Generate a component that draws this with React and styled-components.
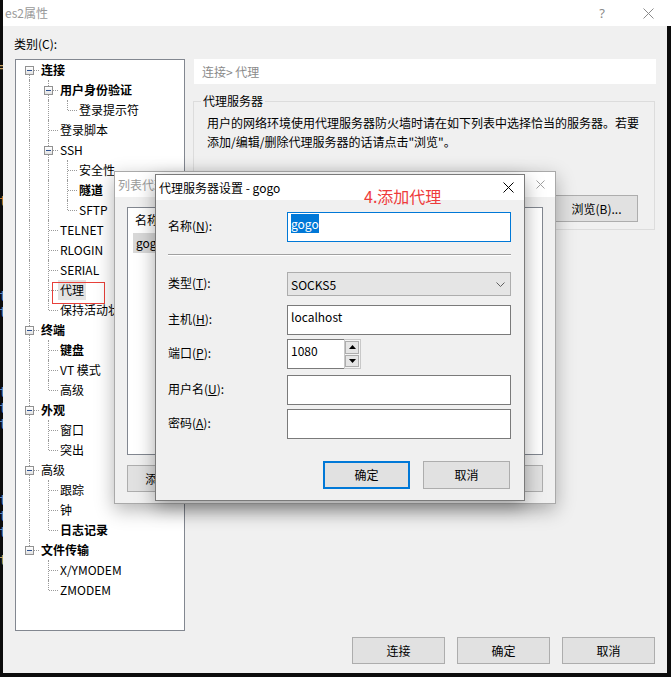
import React from "react";
import styled, { createGlobalStyle, css } from "styled-components";

const GlobalStyle = createGlobalStyle`
  html, body {
    margin: 0;
    padding: 0;
    background: #0c0c0c;
  }
  body {
    font-family: "Noto Sans CJK SC", "Noto Sans", sans-serif;
    font-size: 12px;
    color: #000;
  }
  * {
    box-sizing: border-box;
  }
`;

// Desktop / background
const Screen = styled.div`
  position: relative;
  width: 671px;
  height: 677px;
  overflow: hidden;
  background: #0c0c0c;
  display: flex;
  align-items: flex-start;
`;

const EdgeStrip = styled.div`
  position: relative;
  flex: 0 0 3px;
  height: 100%;
  overflow: hidden;
`;

const EdgeGlyph = styled.span`
  position: absolute;
  left: -1px;
  top: ${(p) => p.$y}px;
  font: 14px/14px "DejaVu Sans Mono", monospace;
  color: ${(p) => p.$c || "#5b86c4"};
`;

// Main properties window
const Window = styled.div`
  width: 664px;
  height: 673px;
  background: #f0f0f0;
  display: flex;
  flex-direction: column;
`;

const TitleBar = styled.div`
  height: 26px;
  margin-right: -4px;
  background: #fff;
  display: flex;
  align-items: center;
  padding-left: 2px;
  color: #999;
`;

const TitleText = styled.span`
  flex: 1;
  line-height: 16px;
`;

const CaptionButton = styled.span`
  width: 46px;
  height: 26px;
  display: flex;
  align-items: center;
  justify-content: center;
  color: #8a8a8a;
  font: 13px "Noto Sans", sans-serif;
`;

const Body = styled.div`
  flex: 1;
  min-height: 0;
  display: flex;
  flex-direction: column;
  padding: 10px 11px 9px 12px;
`;

const CategoryLabel = styled.div`
  height: 16px;
  line-height: 16px;
  margin: 0 0 7px -1px;
`;

const Columns = styled.div`
  flex: 1;
  min-height: 0;
  display: flex;
  gap: 8px;
`;

const Tree = styled.div`
  flex: 0 0 170px;
  border: 1px solid #828790;
  background: #fff;
  padding-left: 4px;
  overflow: hidden;
`;

const TreeRow = styled.div`
  display: flex;
  align-items: center;
  height: 20px;
`;

const Cell = styled.span`
  position: relative;
  flex: 0 0 19px;
  height: 20px;

  &::before {
    content: "";
    display: ${(p) => (p.$up || p.$down ? "block" : "none")};
    position: absolute;
    left: 9px;
    top: ${(p) => (p.$up ? 0 : 10)}px;
    bottom: ${(p) => (p.$down ? 0 : 10)}px;
    border-left: 1px dotted #9a9a9a;
  }

  &::after {
    content: "";
    display: ${(p) => (p.$branch ? "block" : "none")};
    position: absolute;
    left: 10px;
    right: 0;
    top: 10px;
    border-top: 1px dotted #9a9a9a;
  }
`;

const Expander = styled.span`
  position: absolute;
  z-index: 1;
  left: 5px;
  top: 6px;
  width: 9px;
  height: 9px;
  border: 1px solid #919191;
  background: linear-gradient(#ffffff, #e2e2e2);

  &::after {
    content: "";
    position: absolute;
    left: 1px;
    top: 3px;
    width: 5px;
    height: 1px;
    background: #2b4f8f;
  }
`;

const NodeLabel = styled.span`
  position: relative;
  height: 20px;
  line-height: 20px;
  padding: 0 2px;
  white-space: nowrap;
  font-weight: ${(p) => (p.$bold ? 700 : 400)};
  background: ${(p) => (p.$selected ? "#e3e3e3" : "transparent")};

  ${(p) =>
    p.$marked &&
    css`
      &::after {
        content: "";
        position: absolute;
        left: -6px;
        top: 2px;
        width: 51px;
        height: 20px;
        border: 1px solid #e8403a;
      }
    `}
`;

const RightPane = styled.div`
  flex: 1;
  display: flex;
  flex-direction: column;
  min-width: 0;
`;

const Breadcrumb = styled.div`
  height: 25px;
  line-height: 25px;
  margin-left: 1px;
  padding-left: 8px;
  background: #fff;
  color: #8a8a8a;
`;

const GroupBox = styled.fieldset`
  margin: 9px 1px 0 0;
  padding: 0 16px 7px 13px;
  border: 1px solid #dcdcdc;
  min-width: 0;
`;

const Legend = styled.legend`
  margin-left: -6px;
  padding: 0 2px;
  line-height: 16px;
`;

const Description = styled.p`
  margin: 4px 0 0;
  line-height: 19px;
  white-space: nowrap;
`;

const BrowseRow = styled.div`
  display: flex;
  justify-content: flex-end;
  margin-top: 44px;
`;

const Button = styled.button`
  width: ${(p) => p.$w || 93}px;
  height: ${(p) => p.$h || 27}px;
  padding: 0;
  flex-shrink: 0;
  background: #e1e1e1;
  border: ${(p) => (p.$default ? "2px solid #0078d7" : "1px solid #adadad")};
  font-family: inherit;
  font-size: 12px;
  color: #000;
  line-height: 16px;
`;

const Footer = styled.div`
  display: flex;
  justify-content: flex-end;
  gap: 12px;
  margin: 6px 1px 0 0;
`;

// Shared dialog window parts
const DialogTitle = styled.div`
  height: 25px;
  flex-shrink: 0;
  display: flex;
  align-items: center;
  padding: 0 10px 0 3px;
  background: #fff;
  color: ${(p) => (p.$active ? "#000" : "#9a9a9a")};
  line-height: 16px;
`;

const DialogTitleText = styled.span`
  flex: 1;
  white-space: nowrap;
`;

// Background "list proxies" window
const ListWindow = styled.div`
  position: absolute;
  left: 114px;
  top: 171px;
  width: 442px;
  height: 333px;
  display: flex;
  flex-direction: column;
  background: #f0f0f0;
  border: 1px solid #a9a9a9;
  box-shadow: 0 6px 18px rgba(0, 0, 0, 0.3);
`;

const ListBody = styled.div`
  flex: 1;
  display: flex;
  flex-direction: column;
  padding: 10px 12px 0;
`;

const ListBox = styled.div`
  height: 248px;
  background: #fff;
  border: 1px solid #828790;
  padding-top: 3px;
`;

const ListHeader = styled.div`
  height: 18px;
  line-height: 18px;
  padding-left: 7px;
`;

const ListItem = styled.div`
  width: 130px;
  height: 20px;
  line-height: 20px;
  margin: 4px 0 0 5px;
  padding-left: 3px;
  background: #d9d9d9;
`;

const ListButtons = styled.div`
  display: flex;
  justify-content: space-between;
  margin-top: 10px;
`;

// Front "proxy settings" dialog
const ProxyDialog = styled.div`
  position: absolute;
  left: 155px;
  top: 174px;
  width: 370px;
  height: 327px;
  display: flex;
  flex-direction: column;
  background: #f0f0f0;
  border: 1px solid #7a7a7a;
  box-shadow: 0 6px 18px rgba(0, 0, 0, 0.35);
`;

const Annotation = styled.span`
  position: absolute;
  z-index: 2;
  left: 208px;
  top: 11px;
  font-size: 16px;
  line-height: 20px;
  color: #ee3b3b;
  white-space: nowrap;
`;

const Form = styled.div`
  display: flex;
  flex-direction: column;
  padding: 0 13px 0 12px;
`;

const FieldRow = styled.div`
  display: grid;
  grid-template-columns: 119px 1fr;
  align-items: center;
  margin-top: ${(p) => p.$mt}px;
`;

const FieldLabel = styled.label`
  line-height: 16px;
  margin-top: -3px;
  white-space: nowrap;
`;

const TextBox = styled.div`
  height: 30px;
  padding: 1px 3px;
  line-height: 19px;
  background: #fff;
  border: 1px solid ${(p) => (p.$focus ? "#0078d7" : "#7a7a7a")};
  white-space: nowrap;
`;

const Selection = styled.span`
  display: inline-block;
  background: #0078d7;
  color: #fff;
`;

const Separator = styled.div`
  margin-top: 12px;
  border-top: 1px solid #a0a0a0;
  border-bottom: 1px solid #fff;
`;

const Combo = styled.div`
  height: 24px;
  display: flex;
  align-items: center;
  justify-content: space-between;
  padding: 0 5px 0 3px;
  background: #e5e5e5;
  border: 1px solid #adadad;
`;

const SpinBox = styled.div`
  display: flex;
  width: 74px;
  height: 30px;
`;

const SpinInput = styled(TextBox)`
  flex: 1;
  border-right: none;
`;

const SpinButtons = styled.div`
  flex: 0 0 17px;
  display: flex;
  flex-direction: column;
  gap: 1px;
  padding: 1px 1px 1px 0;
  border: 1px solid #c8c8c8;
  background: #f4f4f4;
`;

const SpinButton = styled.span`
  flex: 1;
  display: flex;
  align-items: center;
  justify-content: center;
  background: #e5e5e5;
  border: 1px solid #adadad;
`;

const DialogButtons = styled.div`
  display: flex;
  justify-content: flex-end;
  gap: 13px;
  margin: 22px 1px 0 0;
`;

const CloseIcon = ({ color = "#000", size = 10 }) => (
  <svg width={size} height={size} viewBox={`0 0 ${size} ${size}`}>
    <path
      d={`M0.5 0.5 L${size - 0.5} ${size - 0.5} M${size - 0.5} 0.5 L0.5 ${size - 0.5}`}
      stroke={color}
      strokeWidth="1"
      fill="none"
    />
  </svg>
);

const Chevron = () => (
  <svg width="9" height="5" viewBox="0 0 9 5">
    <path d="M0.5 0.5 L4.5 4.5 L8.5 0.5" stroke="#606060" fill="none" />
  </svg>
);

const Triangle = ({ down }) => (
  <svg width="7" height="4" viewBox="0 0 7 4">
    <path d={down ? "M0 0 L7 0 L3.5 4 Z" : "M3.5 0 L7 4 L0 4 Z"} fill="#000" />
  </svg>
);

const tree = [
  {
    t: "连接",
    b: 1,
    kids: [
      { t: "用户身份验证", b: 1, kids: [{ t: "登录提示符" }] },
      { t: "登录脚本" },
      { t: "SSH", kids: [{ t: "安全性" }, { t: "隧道", b: 1 }, { t: "SFTP" }] },
      { t: "TELNET" },
      { t: "RLOGIN" },
      { t: "SERIAL" },
      { t: "代理", sel: 1 },
      { t: "保持活动状态" },
    ],
  },
  { t: "终端", b: 1, kids: [{ t: "键盘", b: 1 }, { t: "VT 模式" }, { t: "高级" }] },
  { t: "外观", b: 1, kids: [{ t: "窗口" }, { t: "突出" }] },
  { t: "高级", kids: [{ t: "跟踪" }, { t: "钟" }, { t: "日志记录", b: 1 }] },
  { t: "文件传输", b: 1, kids: [{ t: "X/YMODEM" }, { t: "ZMODEM" }] },
];

const flatten = (nodes, guides = [], out = []) => {
  nodes.forEach((n, i) => {
    const last = i === nodes.length - 1;
    out.push({ ...n, guides, last, first: guides.length === 0 && i === 0 });
    if (n.kids) flatten(n.kids, [...guides, !last], out);
  });
  return out;
};

const rows = flatten(tree);

const edgeGlyphs = [
  { y: 60, ch: "=", c: "#c8a060" },
  { y: 194, ch: "t", c: "#d07a30" },
  { y: 289, ch: "t" },
  { y: 305, ch: "t" },
  { y: 385, ch: "t" },
  { y: 401, ch: "t" },
  { y: 417, ch: "t" },
  { y: 493, ch: "t" },
  { y: 509, ch: "t" },
  { y: 525, ch: "t" },
  { y: 553, ch: "t", c: "#c8a060" },
];

const App = () => {
  return (
    <Screen>
      <GlobalStyle />
      <EdgeStrip>
        {edgeGlyphs.map((g, i) => (
          <EdgeGlyph key={i} $y={g.y} $c={g.c}>
            {g.ch}
          </EdgeGlyph>
        ))}
      </EdgeStrip>

      <Window>
        <TitleBar>
          <TitleText>es2属性</TitleText>
          <CaptionButton>?</CaptionButton>
          <CaptionButton>
            <CloseIcon color="#8a8a8a" size={11} />
          </CaptionButton>
        </TitleBar>

        <Body>
          <CategoryLabel>类别(C):</CategoryLabel>
          <Columns>
            <Tree>
              {rows.map((r, i) => (
                <TreeRow key={i}>
                  {r.guides.map((g, j) => (
                    <Cell key={j} $up={g} $down={g} />
                  ))}
                  <Cell $up={!r.first} $down={!r.last} $branch>
                    {r.kids && <Expander />}
                  </Cell>
                  <NodeLabel $bold={r.b} $selected={r.sel} $marked={r.sel}>
                    {r.t}
                  </NodeLabel>
                </TreeRow>
              ))}
            </Tree>

            <RightPane>
              <Breadcrumb>连接&gt; 代理</Breadcrumb>
              <GroupBox>
                <Legend>代理服务器</Legend>
                <Description>
                  用户的网络环境使用代理服务器防火墙时请在如下列表中选择恰当的服务器。若要
                  <br />
                  添加/编辑/删除代理服务器的话请点击"浏览"。
                </Description>
                <BrowseRow>
                  <Button $w={83}>浏览(B)...</Button>
                </BrowseRow>
              </GroupBox>
            </RightPane>
          </Columns>

          <Footer>
            <Button>连接</Button>
            <Button>确定</Button>
            <Button>取消</Button>
          </Footer>
        </Body>
      </Window>

      <ListWindow>
        <DialogTitle>
          <DialogTitleText>列表代理服务器</DialogTitleText>
          <CloseIcon color="#a0a0a0" size={9} />
        </DialogTitle>
        <ListBody>
          <ListBox>
            <ListHeader>名称</ListHeader>
            <ListItem>gogo</ListItem>
          </ListBox>
          <ListButtons>
            <Button $w={86}>添加(A)...</Button>
            <Button $w={86}>编辑(E)...</Button>
            <Button $w={86}>删除(D)</Button>
            <Button $w={86}>关闭</Button>
          </ListButtons>
        </ListBody>
      </ListWindow>

      <ProxyDialog>
        <Annotation>4.添加代理</Annotation>
        <DialogTitle $active>
          <DialogTitleText>代理服务器设置 - gogo</DialogTitleText>
          <CloseIcon color="#000" size={11} />
        </DialogTitle>
        <Form>
          <FieldRow $mt={12}>
            <FieldLabel>
              名称(<u>N</u>):
            </FieldLabel>
            <TextBox $focus>
              <Selection>gogo</Selection>
            </TextBox>
          </FieldRow>

          <Separator />

          <FieldRow $mt={16}>
            <FieldLabel>
              类型(<u>T</u>):
            </FieldLabel>
            <Combo>
              <span>SOCKS5</span>
              <Chevron />
            </Combo>
          </FieldRow>

          <FieldRow $mt={9}>
            <FieldLabel>
              主机(<u>H</u>):
            </FieldLabel>
            <TextBox>localhost</TextBox>
          </FieldRow>

          <FieldRow $mt={4}>
            <FieldLabel>
              端口(<u>P</u>):
            </FieldLabel>
            <SpinBox>
              <SpinInput>1080</SpinInput>
              <SpinButtons>
                <SpinButton>
                  <Triangle />
                </SpinButton>
                <SpinButton>
                  <Triangle down />
                </SpinButton>
              </SpinButtons>
            </SpinBox>
          </FieldRow>

          <FieldRow $mt={6}>
            <FieldLabel>
              用户名(<u>U</u>):
            </FieldLabel>
            <TextBox />
          </FieldRow>

          <FieldRow $mt={4}>
            <FieldLabel>
              密码(<u>A</u>):
            </FieldLabel>
            <TextBox />
          </FieldRow>

          <DialogButtons>
            <Button $w={87} $h={28} $default>
              确定
            </Button>
            <Button $w={87} $h={28}>
              取消
            </Button>
          </DialogButtons>
        </Form>
      </ProxyDialog>
    </Screen>
  );
};

export default App;
